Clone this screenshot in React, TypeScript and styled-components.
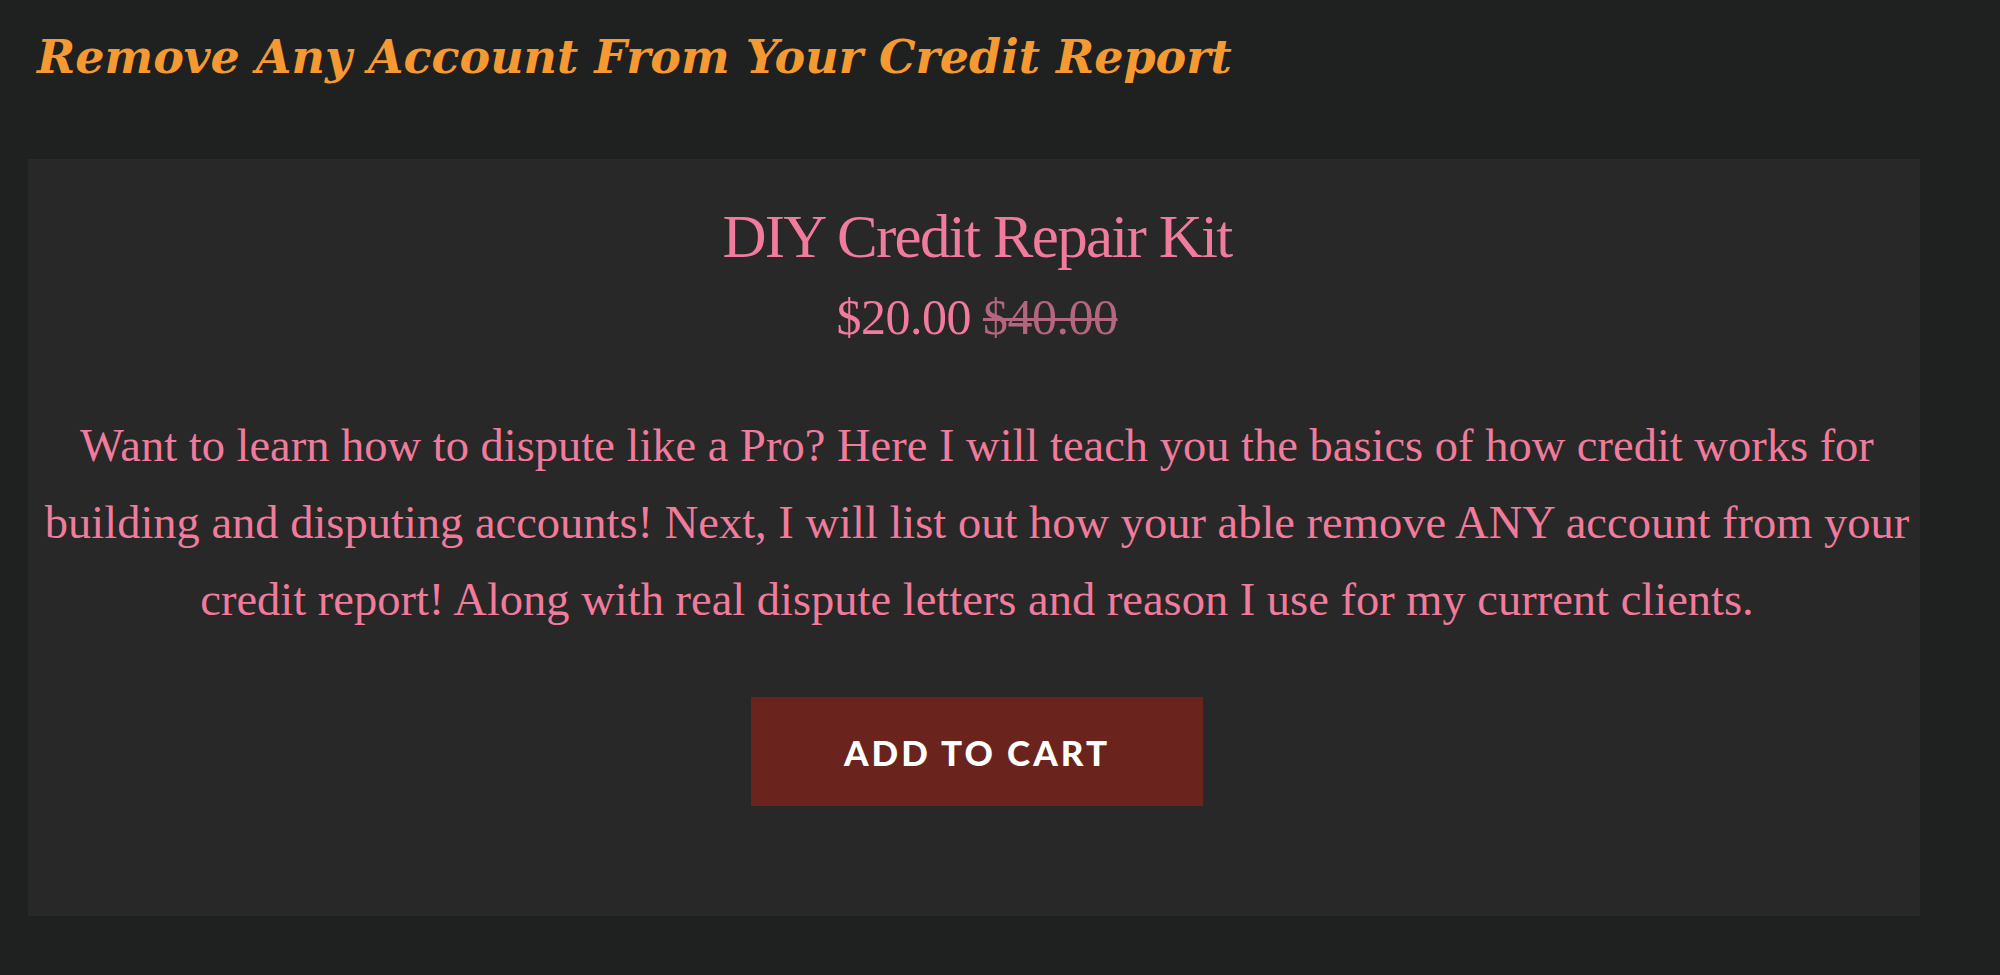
import React from "react";
import styled, { createGlobalStyle } from "styled-components";

const GlobalStyle = createGlobalStyle`
  html, body {
    margin: 0;
    padding: 0;
    background: #1f2020;
  }
  body {
    font-family: "Liberation Serif", serif;
  }
`;

const Page = styled.div`
  min-height: 975px;
  background: #1f2020;
  padding: 30px 80px 0 28px;
  box-sizing: border-box;
`;

const Heading = styled.h2`
  margin: 0 0 74px 9px;
  font-family: "DejaVu Serif", "Liberation Serif", serif;
  font-style: italic;
  font-weight: 700;
  font-size: 46px;
  line-height: 1.2;
  color: #f59a33;
`;

const Card = styled.section`
  background: #272827;
  padding: 42px 6px 110px 12px;
  display: flex;
  flex-direction: column;
  align-items: center;
  text-align: center;
  box-sizing: border-box;
`;

const Title = styled.h3`
  margin: 0;
  font-family: "Liberation Serif", serif;
  font-weight: 400;
  font-size: 61px;
  line-height: 72px;
  letter-spacing: -1.7px;
  color: #f07b9c;
`;

const PriceRow = styled.div`
  margin-top: 14px;
  font-family: "Liberation Serif", serif;
  font-size: 50px;
  line-height: 60px;
  letter-spacing: -0.5px;
  color: #f07b9c;
  display: flex;
  gap: 12px;
`;

const OldPrice = styled.s`
  color: #b5667f;
  text-decoration-thickness: 3px;
`;

const Description = styled.p`
  margin: 60px 0 0;
  font-family: "Liberation Serif", serif;
  font-size: 46.5px;
  line-height: 77px;
  color: #f07b9c;
  white-space: nowrap;
`;

const CartButton = styled.button`
  margin-top: 59px;
  width: 452px;
  height: 109px;
  border: none;
  background: #6b231d;
  color: #ffffff;
  font-family: Lato, "Noto Sans", sans-serif;
  font-weight: 900;
  font-size: 35px;
  letter-spacing: 3px;
  text-transform: uppercase;
  cursor: pointer;
`;

export default function App() {
  return (
    <>
      <GlobalStyle />
      <Page>
        <Heading>Remove Any Account From Your Credit Report</Heading>
        <Card>
          <Title>DIY Credit Repair Kit</Title>
          <PriceRow>
            <span>$20.00</span>
            <OldPrice>$40.00</OldPrice>
          </PriceRow>
          <Description>
            Want to learn how to dispute like a Pro? Here I will teach you the basics of how credit works for
            <br />
            building and disputing accounts! Next, I will list out how your able remove ANY account from your
            <br />
            credit report! Along with real dispute letters and reason I use for my current clients.
          </Description>
          <CartButton>Add to cart</CartButton>
        </Card>
      </Page>
    </>
  );
}
